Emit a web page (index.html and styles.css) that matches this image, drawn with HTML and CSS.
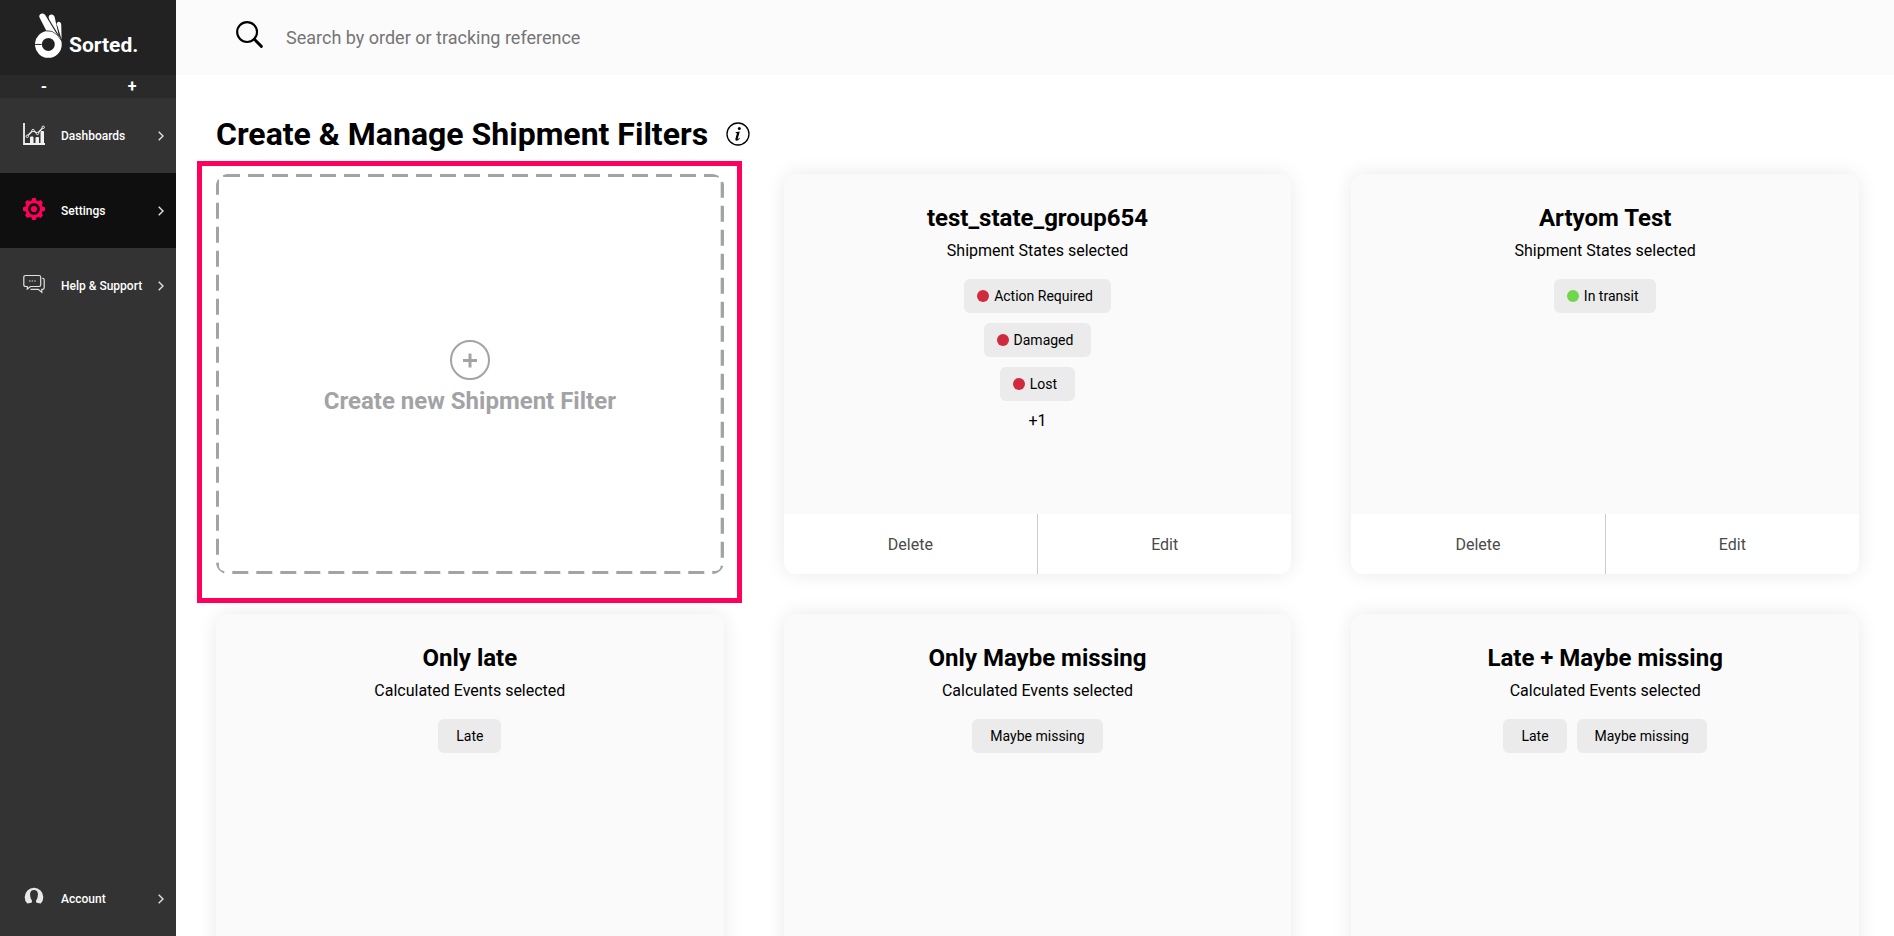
FILE: index.html
```
<!DOCTYPE html>
<html lang="en">
<head>
<meta charset="utf-8">
<meta name="viewport" content="width=device-width, initial-scale=1">
<title>Sorted. Shipment Filters</title>
<link rel="stylesheet" href="styles.css">
</head>
<body>
<div class="app">
  <aside class="sidebar">
    <a class="brand" href="#">
      <svg class="brand-mark" viewBox="0 0 81 136" aria-hidden="true">
        <circle cx="40" cy="95" r="30" fill="none" stroke="#fff" stroke-width="21"/>
        <path d="M0 95h20" stroke="#222" stroke-width="3"/>
        <path d="M13 13C10 1 25-3 31 7L68 68Q52 51 34 54Z" fill="#fff"/>
        <path d="M41 14C40 2 57 1 59 12L71 66 44 22Z" fill="#fff"/>
        <path d="M65 35c0-11 13-11 14 0l1 45L67 38Z" fill="#fff"/>
        <path d="M34 54Q52 51 66 66l14 18" fill="none" stroke="#222" stroke-width="2"/>
      </svg>
      <span class="brand-name">Sorted.</span>
    </a>
    <div class="text-size">
      <button class="text-size-btn" type="button" aria-label="Decrease text size">-</button>
      <button class="text-size-btn" type="button" aria-label="Increase text size">+</button>
    </div>
    <nav class="nav">
      <a class="nav-item" href="#">
        <svg class="nav-icon" viewBox="0 0 22 22" fill="none" stroke="#f0f0f0" aria-hidden="true">
          <path d="M1 0v21h21" stroke-width="1.800"/>
          <path d="M7.500 20v-6h2.500v6M13 20v-5.500h2.500v5.500M18 20V8.500h2.500v11.500" fill="#f0f0f0" stroke-width="1"/>
          <path d="M4.300 13 10 7.500l4.500 3L20.200 4.300" stroke-width="1.400"/>
          <g fill="#333"><circle cx="4.300" cy="13.300" r="1.200"/><circle cx="10" cy="7.500" r="1.200"/><circle cx="14.500" cy="10.500" r="1.200"/><circle cx="20.200" cy="4.300" r="1.200"/></g>
        </svg>
        <span class="nav-label">Dashboards</span>
        <svg class="chevron" viewBox="0 0 6 10" aria-hidden="true"><path d="M.7.7 5 5 .7 9.300"/></svg>
      </a>
      <a class="nav-item nav-item-active" href="#" aria-current="page">
        <svg class="nav-icon" viewBox="-11 -11 22 22" aria-hidden="true">
          <circle r="7.300" fill="none" stroke="#ff005c" stroke-width="2.800"/>
          <circle r="3.100" fill="#ff005c"/>
          <g fill="#ff005c">
            <path id="tooth" d="M-2.600-8-1.700-11h3.400l.9 3Z"/>
            <use href="#tooth" transform="rotate(45)"/><use href="#tooth" transform="rotate(90)"/><use href="#tooth" transform="rotate(135)"/><use href="#tooth" transform="rotate(180)"/><use href="#tooth" transform="rotate(225)"/><use href="#tooth" transform="rotate(270)"/><use href="#tooth" transform="rotate(315)"/>
          </g>
        </svg>
        <span class="nav-label">Settings</span>
        <svg class="chevron" viewBox="0 0 6 10" aria-hidden="true"><path d="M.7.7 5 5 .7 9.300"/></svg>
      </a>
      <a class="nav-item" href="#">
        <svg class="nav-icon" viewBox="0 0 22 22" fill="none" stroke="#e0e0e0" stroke-width="1.200" aria-hidden="true">
          <path d="M2.500 2.500h13.500q1.700 0 1.700 1.700v7.600q0 1.700-1.700 1.700H7.500L4.300 16v-2.500H2.500Q.8 13.500.8 11.800V4.200q0-1.700 1.700-1.700Z"/>
          <path d="M19.300 5.300h.4q1.500 0 1.500 1.500v8q0 1.500-1.500 1.500h-.9v2.900l-3.600-2.900H7.500"/>
          <path d="M6 8h1.500M8.600 8h1.500M11.200 8h1.500"/>
        </svg>
        <span class="nav-label">Help &amp; Support</span>
        <svg class="chevron" viewBox="0 0 6 10" aria-hidden="true"><path d="M.7.7 5 5 .7 9.300"/></svg>
      </a>
      <a class="nav-item nav-item-account" href="#">
        <svg class="nav-icon" viewBox="0 0 22 22" aria-hidden="true">
          <path d="M4.300 17.600A9.300 9.300 0 1 1 17.700 17.600L13.600 16.800Q12.700 16 13.100 14.500 15.200 11.700 14.900 7.400 14.300 4 11 4T7.100 7.400Q6.800 11.700 8.900 14.500 9.300 16 8.400 16.800Z" fill="#e8e8e8"/>
        </svg>
        <span class="nav-label">Account</span>
        <svg class="chevron" viewBox="0 0 6 10" aria-hidden="true"><path d="M.7.7 5 5 .7 9.300"/></svg>
      </a>
    </nav>
  </aside>

  <div class="page">
    <header class="topbar">
      <label class="search-label" for="search">
        <svg class="search-icon" viewBox="0 0 28 28" role="img" aria-label="Search"><circle cx="11.500" cy="11.500" r="10.300" fill="none" stroke="#000" stroke-width="2.200"/><path d="m19 19 7.300 7.300" stroke="#000" stroke-width="3" stroke-linecap="round"/></svg>
      </label>
      <input class="search-input" id="search" type="search" placeholder="Search by order or tracking reference">
    </header>

    <main class="content">
      <div class="heading">
        <h1 class="title">Create &amp; Manage Shipment Filters</h1>
        <button class="info" type="button" aria-label="About shipment filters">
          <svg class="info-icon" viewBox="0 0 24 24" aria-hidden="true"><circle cx="12" cy="12" r="11" fill="none" stroke="#000" stroke-width="1.300"/><circle cx="13.300" cy="6.600" r="1.500"/><path d="M9.500 10.200 13.800 9.600 11.800 16.500Q11.600 17.300 12.100 17.100 12.700 16.800 13.400 15.800L13.900 16.200Q12.300 18.700 10.500 18.700 8.900 18.600 9.400 16.800L10.800 11.900Q11.100 10.900 9.500 10.800Z"/></svg>
        </button>
      </div>

      <div class="grid">
        <div class="create-slot">
          <button class="create" type="button">
            <svg class="create-outline" aria-hidden="true"><rect width="100%" height="100%" rx="8"/></svg>
            <svg class="create-icon" viewBox="0 0 40 40" aria-hidden="true"><circle cx="20" cy="20" r="19" stroke-width="2"/><path d="M13 20.500h14M20 13.500v14" stroke-width="3"/></svg>
            <span class="create-text">Create new Shipment Filter</span>
          </button>
        </div>

        <article class="card">
          <div class="card-body">
            <h2 class="card-title">test_state_group654</h2>
            <p class="card-note">Shipment States selected</p>
            <ul class="chips chips-stacked">
              <li class="chip chip-state"><span class="dot dot-red"></span>Action Required</li>
              <li class="chip chip-state"><span class="dot dot-red"></span>Damaged</li>
              <li class="chip chip-state"><span class="dot dot-red"></span>Lost</li>
            </ul>
            <p class="more">+1</p>
          </div>
          <div class="actions"><button class="action" type="button">Delete</button><button class="action" type="button">Edit</button></div>
        </article>

        <article class="card">
          <div class="card-body">
            <h2 class="card-title">Artyom Test</h2>
            <p class="card-note">Shipment States selected</p>
            <ul class="chips chips-stacked">
              <li class="chip chip-state"><span class="dot dot-green"></span>In transit</li>
            </ul>
          </div>
          <div class="actions"><button class="action" type="button">Delete</button><button class="action" type="button">Edit</button></div>
        </article>

        <article class="card">
          <div class="card-body">
            <h2 class="card-title">Only late</h2>
            <p class="card-note">Calculated Events selected</p>
            <ul class="chips"><li class="chip">Late</li></ul>
          </div>
        </article>

        <article class="card">
          <div class="card-body">
            <h2 class="card-title">Only Maybe missing</h2>
            <p class="card-note">Calculated Events selected</p>
            <ul class="chips"><li class="chip">Maybe missing</li></ul>
          </div>
        </article>

        <article class="card">
          <div class="card-body">
            <h2 class="card-title">Late + Maybe missing</h2>
            <p class="card-note">Calculated Events selected</p>
            <ul class="chips"><li class="chip">Late</li><li class="chip">Maybe missing</li></ul>
          </div>
        </article>
      </div>
    </main>
  </div>
</div>
</body>
</html>
```
FILE: styles.css
```
*,
*::before,
*::after {
  box-sizing: border-box;
}

body {
  margin: 0;
  background: #fff;
  color: #000;
  font: 400 16px/24px Roboto, "Liberation Sans", sans-serif;
}

button {
  padding: 0;
  border: 0;
  background: none;
  color: inherit;
  font: inherit;
  cursor: pointer;
}

a {
  color: inherit;
  text-decoration: none;
}

h1,
h2,
p,
ul {
  margin: 0;
  padding: 0;
}

svg {
  display: block;
  flex: none;
}

.app {
  display: flex;
  height: 100vh;
}

/* Sidebar */
.sidebar {
  display: flex;
  flex: none;
  flex-direction: column;
  width: 176px;
  background: #333;
  color: #fff;
}

.brand {
  display: flex;
  align-items: flex-end;
  gap: 7px;
  height: 75px;
  padding: 0 0 17px 35px;
  background: #222;
}

.brand-mark {
  width: 27px;
  height: 45px;
}

.brand-name {
  font-size: 21px;
  font-weight: 700;
  line-height: 26px;
}

.text-size {
  display: flex;
  height: 23px;
  background: #2a2a2a;
}

.text-size-btn {
  flex: 1;
  font-size: 16px;
  font-weight: 700;
  line-height: 23px;
}

.nav {
  display: flex;
  flex: 1;
  flex-direction: column;
}

.nav-item {
  display: flex;
  align-items: center;
  height: 75px;
  padding: 0 12px 0 23px;
  font-size: 12px;
  font-weight: 500;
  line-height: 16px;
}

.nav-item-active {
  background: #0f0f0f;
}

.nav-item-account {
  margin-top: auto;
}

.nav-icon {
  width: 22px;
  height: 22px;
  margin: 0 16px 4px 0;
}

.nav-label {
  flex: 1;
}

.chevron {
  width: 6px;
  height: 10px;
  fill: none;
  stroke: #e0e0e0;
  stroke-width: 1.4px;
}

/* Top bar */
.page {
  display: flex;
  flex: 1;
  flex-direction: column;
  min-width: 0;
}

.topbar {
  display: flex;
  flex: none;
  align-items: center;
  height: 75px;
  padding: 0 35px 0 60px;
  background: #fbfbfb;
}

.search-label {
  margin: 0 23px 6px 0;
}

.search-icon {
  width: 27px;
  height: 27px;
}

.search-input {
  flex: 1;
  padding: 0;
  border: 0;
  outline: 0;
  background: none;
  font: inherit;
  font-size: 18px;
}

.search-input::placeholder {
  color: #757575;
}

/* Content */
.content {
  flex: 1;
  min-height: 0;
  overflow-y: auto;
  padding: 39px 35px 40px 40px;
  scrollbar-width: none;
}

.heading {
  display: flex;
  align-items: center;
  gap: 18px;
  margin-bottom: 20px;
}

.title {
  font-size: 32px;
  font-weight: 700;
  line-height: 40px;
}

.info-icon {
  width: 24px;
  height: 24px;
}

.grid {
  display: grid;
  grid-template-columns: repeat(3, minmax(0, 1fr));
  grid-auto-rows: minmax(400px, auto);
  gap: 40px 60px;
}

.create-slot {
  position: relative;
  display: flex;
}

.create-slot::after {
  content: "";
  position: absolute;
  z-index: 1;
  inset: -13px -18px -29px -19px;
  border: 5px solid #ff005c;
  pointer-events: none;
}

.create {
  position: relative;
  display: flex;
  flex: 1;
  flex-direction: column;
  align-items: center;
  justify-content: center;
  gap: 7px;
  padding-top: 6px;
  overflow: hidden;
  border-radius: 12px;
  color: #a3a3a6;
}

.create-outline {
  position: absolute;
  inset: 0;
  width: 100%;
  height: 100%;
  fill: none;
  stroke: currentColor;
  stroke-width: 6px;
  stroke-dasharray: 16 8;
}

.create-icon {
  width: 40px;
  height: 40px;
  fill: none;
  stroke: currentColor;
}

.create-text {
  font-size: 24px;
  font-weight: 700;
  line-height: 28px;
}

.card {
  display: flex;
  flex-direction: column;
  border-radius: 12px;
  background: #fafafa;
  box-shadow: 0 0 20px rgba(0, 0, 0, 0.09);
}

.card-body {
  flex: 1;
  padding: 30px 20px 20px;
  text-align: center;
}

.card-title {
  margin-bottom: 7px;
  font-size: 24px;
  font-weight: 700;
  line-height: 28px;
}

.card-note {
  margin-bottom: 16px;
}

.chips {
  display: flex;
  flex-wrap: wrap;
  justify-content: center;
  gap: 10px;
  list-style: none;
}

.chips-stacked {
  flex-direction: column;
  align-items: center;
}

.chip {
  display: flex;
  align-items: center;
  padding: 7px 18px;
  border-radius: 6px;
  background: #ebebeb;
  font-size: 14px;
  line-height: 20px;
}

.chip-state {
  gap: 5px;
  padding-left: 13px;
}

.dot {
  width: 12px;
  height: 12px;
  border-radius: 50%;
}

.dot-red {
  background: #cf2a3e;
}

.dot-green {
  background: #70d64c;
}

.more {
  margin-top: 8px;
}

.actions {
  display: flex;
  height: 60px;
  border-radius: 0 0 12px 12px;
  background: #fff;
}

.action {
  flex: 1;
  padding-top: 2px;
  color: #4a4a4a;
}

.action + .action {
  border-left: 1px solid #ccc;
}
```
